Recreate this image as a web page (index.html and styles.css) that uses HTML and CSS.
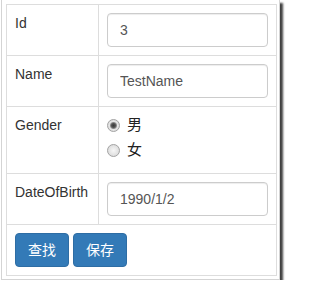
FILE: index.html
```html
<!DOCTYPE html>
<html>
<head>
<meta charset="utf-8">
<link rel="stylesheet" href="styles.css">
</head>
<body>
<div class="frame">
  <table class="grid">
    <tr>
      <td class="lbl">Id</td>
      <td class="val"><input class="field" type="text" value="3"></td>
    </tr>
    <tr>
      <td class="lbl">Name</td>
      <td class="val"><input class="field" type="text" value="TestName"></td>
    </tr>
    <tr>
      <td class="lbl">Gender</td>
      <td class="val">
        <label class="radio"><input class="dot" type="radio" name="g" checked>男</label>
        <label class="radio"><input class="dot" type="radio" name="g">女</label>
      </td>
    </tr>
    <tr>
      <td class="lbl">DateOfBirth</td>
      <td class="val"><input class="field" type="text" value="1990/1/2"></td>
    </tr>
    <tr>
      <td class="bar" colspan="2">
        <div class="actions">
          <button class="btn" type="button">查找</button>
          <button class="btn" type="button">保存</button>
        </div>
      </td>
    </tr>
  </table>
</div>
</body>
</html>
```

FILE: styles.css
```css
html, body {
  margin: 0;
  padding: 0;
  background: #fff;
}
body {
  font-family: "Liberation Sans", "Noto Sans CJK SC", sans-serif;
  font-size: 14px;
  line-height: 20px;
  color: #333;
}
.frame {
  margin-left: 1px;
  width: 271px;
  padding: 4px 2px 3px 4px;
  border: 1px solid #d4d4d4;
  border-top: none;
  box-shadow: 3px 3px 2px rgba(0, 0, 0, 0.75);
}
.grid {
  border-collapse: collapse;
  width: 271px;
  border: 1px solid #ddd;
}
.grid td {
  border: 1px solid #ddd;
  padding: 8px;
  vertical-align: top;
}
.lbl {
  width: 75px;
}
.field {
  display: block;
  box-sizing: border-box;
  width: 100%;
  height: 34px;
  margin: 0;
  padding: 6px 12px;
  font-family: inherit;
  font-size: 14px;
  line-height: 20px;
  color: #555;
  background: #fff;
  border: 1px solid #ccc;
  border-radius: 4px;
  box-shadow: inset 0 1px 1px rgba(0, 0, 0, 0.075);
  outline: none;
}
.radio {
  display: block;
  position: relative;
  padding-left: 20px;
  height: 20px;
  margin-bottom: 5px;
  font-size: 15px;
  color: #222;
}
.dot {
  -webkit-appearance: none;
  appearance: none;
  position: absolute;
  left: 0;
  top: 4px;
  width: 13px;
  height: 13px;
  margin: 0;
  box-sizing: border-box;
  border-radius: 50%;
  border: 1px solid #a4a4a4;
  background: radial-gradient(circle at 50% 50%, #f6f6f6 0, #e2e2e2 60%, #d0d0d0 100%);
}
.dot:checked {
  background: radial-gradient(circle at 50% 50%, #3a3a3a 0, #555 2px, #8a8a8a 3px, #e6e6e6 4px, #d4d4d4 100%);
}
.actions {
  display: flex;
  gap: 4px;
}
.btn {
  box-sizing: border-box;
  height: 34px;
  margin: 0;
  padding: 6px 12px;
  font-family: "Liberation Sans", "Noto Sans CJK SC", sans-serif;
  font-size: 14px;
  line-height: 20px;
  color: #fff;
  background: #337ab7;
  border: 1px solid #2e6da4;
  border-radius: 4px;
}
```
